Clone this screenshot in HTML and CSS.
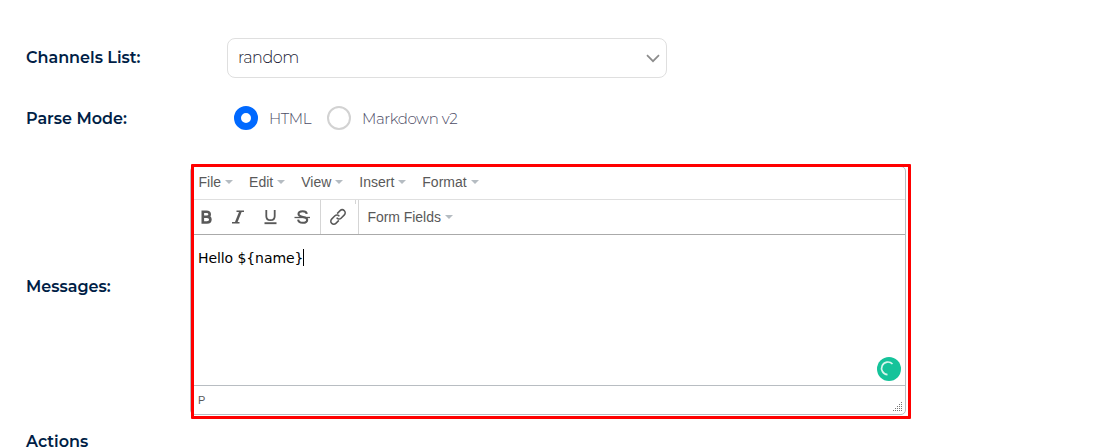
FILE: index.html
```html
<!DOCTYPE html>
<html lang="en">
<head>
<meta charset="utf-8">
<title>Channel message settings</title>
<link rel="stylesheet" href="styles.css">
</head>
<body>
<main class="form">
  <div class="row row-select">
    <div class="label channels"><span>Channels List:</span></div>
    <div class="select"><span>random</span>
      <svg width="14" height="9" viewBox="0 0 14 9"><path d="M1 1.2L7 7.2L13 1.2" fill="none" stroke="#8c8c8c" stroke-width="1.7"/></svg>
    </div>
  </div>
  <div class="row row-radio">
    <div class="label parse"><span>Parse Mode:</span></div>
    <div class="radios">
      <span class="radio checked"></span><span class="radio-text html">HTML</span>
      <span class="radio"></span><span class="radio-text markdown">Markdown v2</span>
    </div>
  </div>
  <div class="row row-editor">
    <div class="label messages"><span>Messages:</span></div>
    <div class="editor-wrap">
      <div class="editor">
        <div class="menubar">
          <span class="menu">File</span><span class="menu">Edit</span><span class="menu">View</span><span class="menu">Insert</span><span class="menu">Format</span>
        </div>
        <div class="toolbar">
          <div class="group styles">
            <svg width="32" height="32" viewBox="0 0 32 32"><path d="M11.800 10.800h3.600c2.200 0 3.300.9 3.300 2.500S17.600 15.800 15.400 15.800H11.800zM11.800 15.800h4.200c2.200 0 3.400 1 3.400 2.800s-1.200 2.900-3.400 2.900H11.800z" fill="none" stroke="#595959" stroke-width="2.600"/></svg>
            <svg width="32" height="32" viewBox="0 0 32 32"><path d="M13.500 10.200h7.500M9 21.800h7.500" fill="none" stroke="#595959" stroke-width="1.600"/><path d="M17.600 10.200L13 21.800" stroke="#595959" stroke-width="2.400"/></svg>
            <svg width="32" height="32" viewBox="0 0 32 32"><path d="M11.300 9v6.200c0 2.700 1.500 4 4.200 4s4.200-1.300 4.200-4V9" fill="none" stroke="#595959" stroke-width="1.800"/><path d="M9.500 22.200h12" stroke="#595959" stroke-width="1.900"/></svg>
            <svg width="32" height="32" viewBox="0 0 32 32"><path d="M19.800 12.800c-.3-1.800-1.800-2.600-4.100-2.600-2.400 0-4.200 1-4.200 2.900 0 4 8.700 2 8.700 5.600 0 2-1.900 3.100-4.500 3.100-2.700 0-4.300-1.100-4.600-3.200" fill="none" stroke="#595959" stroke-width="2.100"/><path d="M7.500 16.500h15.500" stroke="#595959" stroke-width="1.300"/></svg>
          </div>
          <div class="group link">
            <svg width="18" height="18" viewBox="0 0 18 18"><g fill="none" stroke="#595959" stroke-width="1.500" transform="rotate(-45 9 9)"><path d="M7.200 12H3a2.900 2.900 0 0 1-2.900-2.900v-.2A2.900 2.900 0 0 1 3 6h4.700a2.700 2.700 0 0 1 2.600 3.500"/><path d="M10.800 6H15a2.900 2.900 0 0 1 2.900 2.900v.2A2.900 2.900 0 0 1 15 12h-4.700a2.700 2.700 0 0 1-2.600-3.500"/></g></svg>
            <i class="tick"></i>
          </div>
          <div class="group fields"><span class="menu">Form Fields</span></div>
        </div>
        <div class="content"><span class="message">Hello ${name}</span><span class="cursor"></span></div>
        <div class="statusbar"><span>P</span>
          <svg width="10" height="10" viewBox="0 0 10 10" fill="#777"><path d="M8 0h1v1H8zM6 2h1v1H6zM8 2h1v1H8zM4 4h1v1H4zM6 4h1v1H6zM8 4h1v1H8zM2 6h1v1H2zM4 6h1v1H4zM6 6h1v1H6zM8 6h1v1H8zM0 8h1v1H0zM2 8h1v1H2zM4 8h1v1H4zM6 8h1v1H6zM8 8h1v1H8z"/></svg>
        </div>
      </div>
      <svg class="assistant" width="24" height="24" viewBox="0 0 24 24"><circle cx="12" cy="12" r="12" fill="#15c39a"/><path d="M15.500 7A6.300 6.300 0 1 0 10.500 17.600" fill="none" stroke="#d7f5ed" stroke-width="1.700"/></svg>
      <div class="highlight"></div>
    </div>
  </div>
  <div class="row row-actions"><div class="label actions"><span>Actions</span></div></div>
</main>
</body>
</html>
```

FILE: styles.css
```css
* { box-sizing: border-box; }
body { margin: 0; background: #fff; overflow: hidden; height: 447px; }
.form { padding: 38px 0 0 26px; font-family: Montserrat, Inter, sans-serif; }
.row { display: flex; align-items: center; }
.row svg { display: block; flex: none; }
.label { flex: none; color: #001e46; font-size: 16px; font-weight: 600; line-height: 20px; white-space: nowrap; }
.channels { width: 201px; }
.parse { width: 208px; padding-top: 2px; }
.messages { width: 164px; padding-bottom: 7px; }
.select { width: 440px; height: 40px; border: 1px solid #dfdfdf; border-radius: 8px; padding: 0 6px 0 10px; display: flex; align-items: center; justify-content: space-between; font-size: 16px; font-weight: 300; letter-spacing: -.45px; line-height: 20px; color: #1a1a33; }
.select span { padding-bottom: 1px; }
.row-radio { margin-top: 28px; height: 24px; }
.radios { display: flex; align-items: center; }
.radio { width: 24px; height: 24px; border: 2px solid #d2d2d2; border-radius: 50%; }
.radio.checked { border: 7px solid #0069ff; }
.radio-text { margin-left: 11px; font-size: 15px; font-weight: 300; letter-spacing: -.4px; color: #4c4c66; white-space: nowrap; }
.html { width: 47px; margin-right: 11px; }
.row-editor { margin-top: 36px; height: 249px; }
.editor-wrap { position: relative; width: 716px; height: 249px; }
.editor { height: 249px; border: 1px solid #b8bdc2; border-radius: 5px; display: flex; flex-direction: column; font-family: "Liberation Sans", Arial, sans-serif; font-size: 14px; color: #595959; }
.menubar { height: 33px; border-bottom: 1px solid #dfdfdf; display: flex; align-items: center; gap: 16px; padding: 0 0 2px 7.500px; }
.menu { display: flex; align-items: center; gap: 4px; white-space: nowrap; }
.menu::after { content: ""; border: 4px solid transparent; border-top-color: #b5bcc2; border-bottom: 0; }
.toolbar { height: 35px; border-bottom: 1px solid #aaa; display: flex; }
.group { display: flex; align-items: center; }
.styles { width: 129px; }
.link { width: 38px; border-left: 1px solid #d5d5d5; padding-left: 8px; }
.tick { align-self: flex-start; width: 1px; height: 4px; margin-left: 8px; background: #d5d5d5; }
.fields { border-left: 1px solid #d5d5d5; padding-left: 8.500px; }
.fields .menu { letter-spacing: -.05px; }
.content { flex: 1; display: flex; padding: 15px 0 0 7px; font: 14px/17px "DejaVu Sans", Verdana, sans-serif; color: #000; }
.message { letter-spacing: -.08px; }
.cursor { width: 1px; height: 17px; margin-top: -1px; background: #000; }
.statusbar { height: 29px; border-top: 1px solid #b8bdc2; display: flex; align-items: center; justify-content: space-between; padding: 0 2px 0 7px; font-size: 11px; }
.statusbar svg { align-self: flex-end; margin-bottom: 2px; }
.assistant { position: absolute; left: 687px; top: 191px; }
.highlight { position: absolute; left: 1px; top: -2px; width: 720px; height: 255px; border: 3px solid #f00; border-radius: 1px; }
.row-actions { margin-top: 17px; height: 20px; }
```
